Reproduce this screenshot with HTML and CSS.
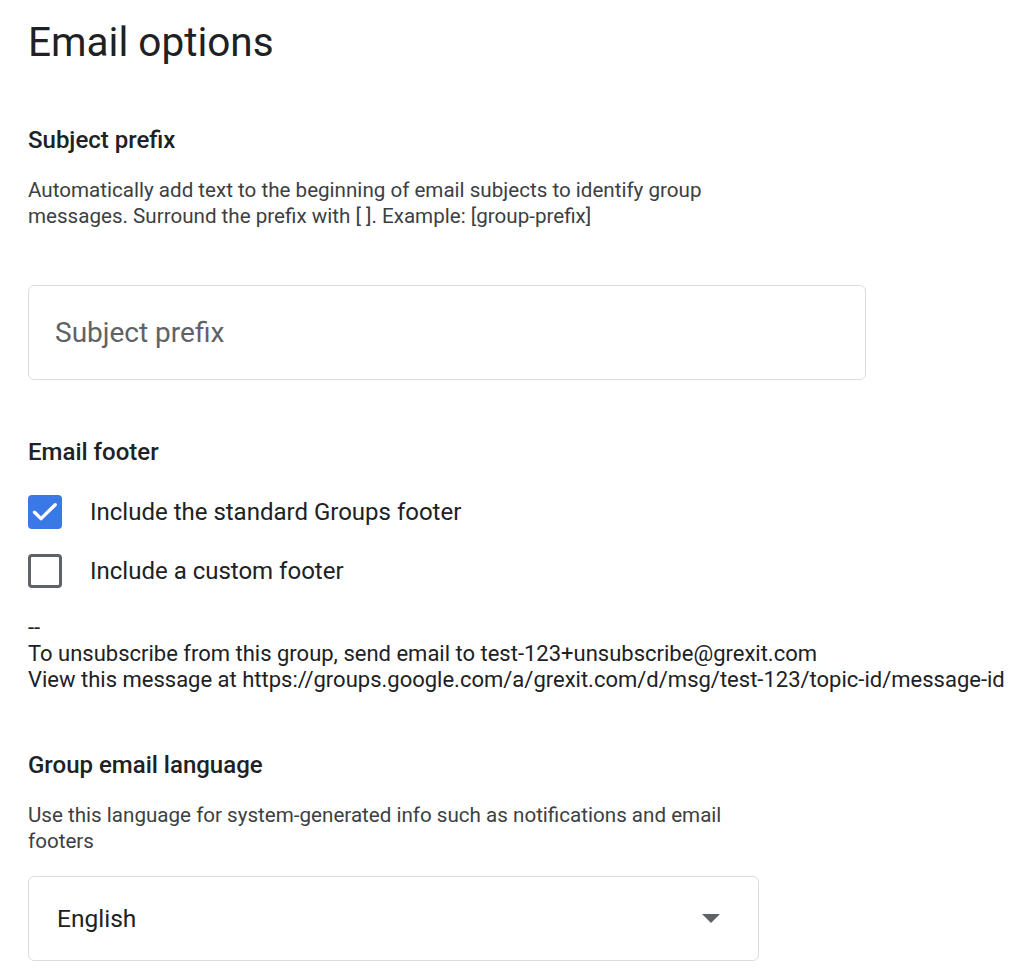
FILE: index.html
```html
<!DOCTYPE html>
<html lang="en">
<head>
  <meta charset="UTF-8">
  <meta name="viewport" content="width=device-width, initial-scale=1.0">
  <title>Email options</title>
  <link rel="stylesheet" href="styles.css">
</head>
<body>

<div class="page">
  <h1>Email options</h1>

  <section class="section">
    <h2>Subject prefix</h2>
    <p class="desc">Automatically add text to the beginning of email subjects to identify group<br>messages. Surround the prefix with [ ]. Example: [group-prefix]</p>
    <div class="field field-wide">
      <input type="text" placeholder="Subject prefix">
    </div>
  </section>

  <section class="section">
    <h2>Email footer</h2>
    <label class="check-row first">
      <span class="box checked">
        <svg viewBox="0 0 24 24" width="34" height="34"><path d="M4.6 12.2l4.6 4.5L19.2 6.9" fill="none" stroke="#fff" stroke-width="2.4" stroke-linecap="round" stroke-linejoin="round"/></svg>
      </span>
      <span class="check-label">Include the standard Groups footer</span>
    </label>
    <label class="check-row">
      <span class="box"></span>
      <span class="check-label">Include a custom footer</span>
    </label>
    <div class="footer-preview">
      --<br>
      To unsubscribe from this group, send email to test-123+unsubscribe@grexit.com<br>
      View this message at https://groups.google.com/a/grexit.com/d/msg/test-123/topic-id/message-id
    </div>
  </section>

  <section class="section">
    <h2>Group email language</h2>
    <p class="desc">Use this language for system-generated info such as notifications and email<br>footers</p>
    <div class="field field-select">
      <span class="select-value">English</span>
      <span class="arrow"></span>
    </div>
  </section>
</div>

</body>
</html>
```

FILE: styles.css
```css
body {
  margin: 0;
  padding: 0;
  background: #fff;
  font-family: Roboto, 'Noto Sans', sans-serif;
  color: #202124;
}

.page {
  padding: 16px 0 0 28px;
}

h1 {
  margin: 0;
  font-size: 40.5px;
  font-weight: 400;
  line-height: 52px;
}

.section {
  margin-top: 57px;
}

h2 {
  margin: 0;
  font-size: 24px;
  font-weight: 500;
  line-height: 30px;
}

.desc {
  margin: 22px 0 0;
  font-size: 20.6px;
  line-height: 26px;
  color: #3c4043;
}

.field {
  border: 1px solid #dadce0;
  border-radius: 6px;
  box-sizing: border-box;
  background: #fff;
}

.field-wide {
  width: 838px;
  height: 95px;
  margin-top: 56px;
  display: flex;
  align-items: center;
}

.field-wide input {
  border: none;
  outline: none;
  background: transparent;
  width: 100%;
  padding: 0 0 0 26px;
  font-family: Roboto, sans-serif;
  font-size: 28px;
  color: #202124;
}

.field-wide input::placeholder {
  color: #5f6368;
}

.check-row {
  display: flex;
  align-items: center;
  height: 34px;
  margin-top: 25px;
}

.check-row.first {
  margin-top: 28px;
}

.box {
  width: 34px;
  height: 34px;
  flex: none;
  box-sizing: border-box;
  border: 3px solid #5f6368;
  border-radius: 4px;
  display: flex;
  align-items: center;
  justify-content: center;
}

.box.checked {
  background: #3b78e7;
  border: none;
}

.check-label {
  margin-left: 28px;
  font-size: 24px;
}

.footer-preview {
  margin-top: 27px;
  font-size: 22px;
  line-height: 26px;
  color: #202124;
}

.field-select {
  width: 731px;
  height: 85px;
  margin-top: 22px;
  display: flex;
  align-items: center;
  justify-content: space-between;
  padding: 0 38px 0 28px;
}

.select-value {
  font-size: 24.5px;
}

.arrow {
  width: 0;
  height: 0;
  border-left: 9px solid transparent;
  border-right: 9px solid transparent;
  border-top: 9px solid #5f6368;
}
```
